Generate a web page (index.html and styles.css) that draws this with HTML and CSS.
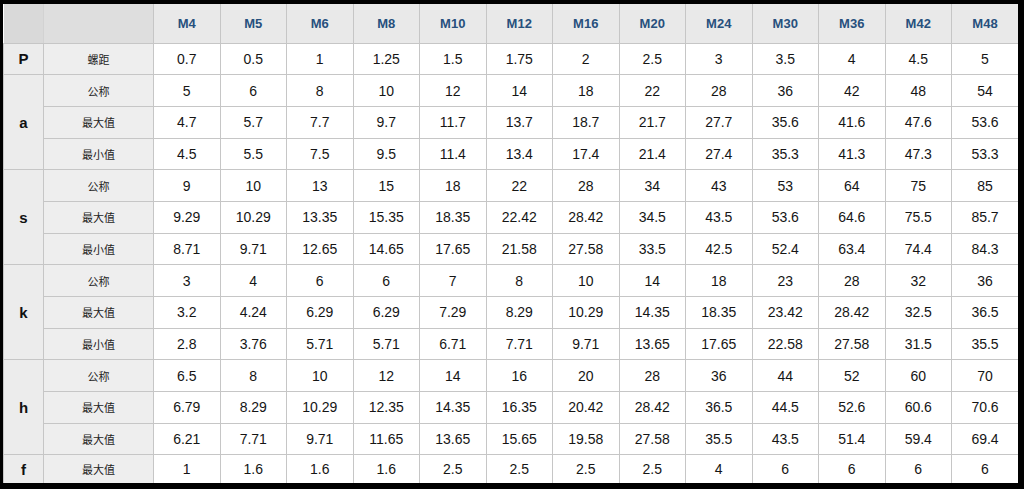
FILE: index.html
```html
<!DOCTYPE html>
<html lang="zh">
<head>
<meta charset="utf-8">
<title>螺母尺寸表</title>
<link rel="stylesheet" href="styles.css">
</head>
<body>
<div class="frame">
<table class="spec">
<colgroup>
<col class="c-sym"><col class="c-name">
<col><col><col><col><col><col><col><col><col><col><col><col><col>
</colgroup>
<thead>
<tr class="head">
<th class="corner"></th><th class="corner2"></th>
<th>M4</th><th>M5</th><th>M6</th><th>M8</th><th>M10</th><th>M12</th><th>M16</th><th>M20</th><th>M24</th><th>M30</th><th>M36</th><th>M42</th><th>M48</th>
</tr>
</thead>
<tbody>
<tr><th class="sym">P</th><th class="name">螺距</th><td>0.7</td><td>0.5</td><td>1</td><td>1.25</td><td>1.5</td><td>1.75</td><td>2</td><td>2.5</td><td>3</td><td>3.5</td><td>4</td><td>4.5</td><td>5</td></tr>
<tr><th class="sym" rowspan="3">a</th><th class="name">公称</th><td>5</td><td>6</td><td>8</td><td>10</td><td>12</td><td>14</td><td>18</td><td>22</td><td>28</td><td>36</td><td>42</td><td>48</td><td>54</td></tr>
<tr><th class="name">最大值</th><td>4.7</td><td>5.7</td><td>7.7</td><td>9.7</td><td>11.7</td><td>13.7</td><td>18.7</td><td>21.7</td><td>27.7</td><td>35.6</td><td>41.6</td><td>47.6</td><td>53.6</td></tr>
<tr><th class="name">最小值</th><td>4.5</td><td>5.5</td><td>7.5</td><td>9.5</td><td>11.4</td><td>13.4</td><td>17.4</td><td>21.4</td><td>27.4</td><td>35.3</td><td>41.3</td><td>47.3</td><td>53.3</td></tr>
<tr><th class="sym" rowspan="3">s</th><th class="name">公称</th><td>9</td><td>10</td><td>13</td><td>15</td><td>18</td><td>22</td><td>28</td><td>34</td><td>43</td><td>53</td><td>64</td><td>75</td><td>85</td></tr>
<tr><th class="name">最大值</th><td>9.29</td><td>10.29</td><td>13.35</td><td>15.35</td><td>18.35</td><td>22.42</td><td>28.42</td><td>34.5</td><td>43.5</td><td>53.6</td><td>64.6</td><td>75.5</td><td>85.7</td></tr>
<tr><th class="name">最小值</th><td>8.71</td><td>9.71</td><td>12.65</td><td>14.65</td><td>17.65</td><td>21.58</td><td>27.58</td><td>33.5</td><td>42.5</td><td>52.4</td><td>63.4</td><td>74.4</td><td>84.3</td></tr>
<tr><th class="sym" rowspan="3">k</th><th class="name">公称</th><td>3</td><td>4</td><td>6</td><td>6</td><td>7</td><td>8</td><td>10</td><td>14</td><td>18</td><td>23</td><td>28</td><td>32</td><td>36</td></tr>
<tr><th class="name">最大值</th><td>3.2</td><td>4.24</td><td>6.29</td><td>6.29</td><td>7.29</td><td>8.29</td><td>10.29</td><td>14.35</td><td>18.35</td><td>23.42</td><td>28.42</td><td>32.5</td><td>36.5</td></tr>
<tr><th class="name">最小值</th><td>2.8</td><td>3.76</td><td>5.71</td><td>5.71</td><td>6.71</td><td>7.71</td><td>9.71</td><td>13.65</td><td>17.65</td><td>22.58</td><td>27.58</td><td>31.5</td><td>35.5</td></tr>
<tr><th class="sym" rowspan="3">h</th><th class="name">公称</th><td>6.5</td><td>8</td><td>10</td><td>12</td><td>14</td><td>16</td><td>20</td><td>28</td><td>36</td><td>44</td><td>52</td><td>60</td><td>70</td></tr>
<tr><th class="name">最大值</th><td>6.79</td><td>8.29</td><td>10.29</td><td>12.35</td><td>14.35</td><td>16.35</td><td>20.42</td><td>28.42</td><td>36.5</td><td>44.5</td><td>52.6</td><td>60.6</td><td>70.6</td></tr>
<tr><th class="name">最大值</th><td>6.21</td><td>7.71</td><td>9.71</td><td>11.65</td><td>13.65</td><td>15.65</td><td>19.58</td><td>27.58</td><td>35.5</td><td>43.5</td><td>51.4</td><td>59.4</td><td>69.4</td></tr>
<tr class="last"><th class="sym">f</th><th class="name">最大值</th><td>1</td><td>1.6</td><td>1.6</td><td>1.6</td><td>2.5</td><td>2.5</td><td>2.5</td><td>2.5</td><td>4</td><td>6</td><td>6</td><td>6</td><td>6</td></tr>
</tbody>
</table>
</div>
</body>
</html>
```
FILE: styles.css
```css
html, body {
  margin: 0;
  padding: 0;
  background: #000;
}
body {
  width: 1024px;
  height: 489px;
  overflow: hidden;
}
.frame {
  padding: 4px 6px 6px 3px;
}
.spec {
  width: 1015px;
  height: 479px;
  border-collapse: collapse;
  table-layout: fixed;
  background: #fff;
  font-family: "Liberation Sans", Arial, "Noto Sans CJK SC", sans-serif;
  color: #111;
}
.c-sym { width: 40px; }
.c-name { width: 110px; }
.spec th, .spec td {
  border: 1px solid #c6c6c6;
  text-align: center;
  vertical-align: middle;
  padding: 0;
}
.spec tr { height: 31.7px; }
.spec tr.head { height: 39px; }
.spec tr.last { height: 28px; }
.head th {
  background: #e9e9e9;
  color: #27507d;
  font-size: 13px;
  font-weight: bold;
  border-top: none;
}
.head th.corner {
  background: #d9d9d9;
  border-left: none;
  border-right-color: #d2d2d2;
}
.head th.corner2 {
  background: #dedede;
}
.head th:last-child { border-right: none; }
.spec td {
  font-size: 14px;
  color: #151515;
}
.spec td:last-child { border-right: none; }
.last td, .last th { border-bottom: none; }
.sym {
  background: #ececec;
  font-size: 15px;
  font-weight: bold;
  border-left: none;
}
.name {
  background: #eeeeee;
  font-size: 11px;
  font-weight: normal;
  color: #222;
  font-family: "Noto Sans CJK SC", sans-serif;
}
```
